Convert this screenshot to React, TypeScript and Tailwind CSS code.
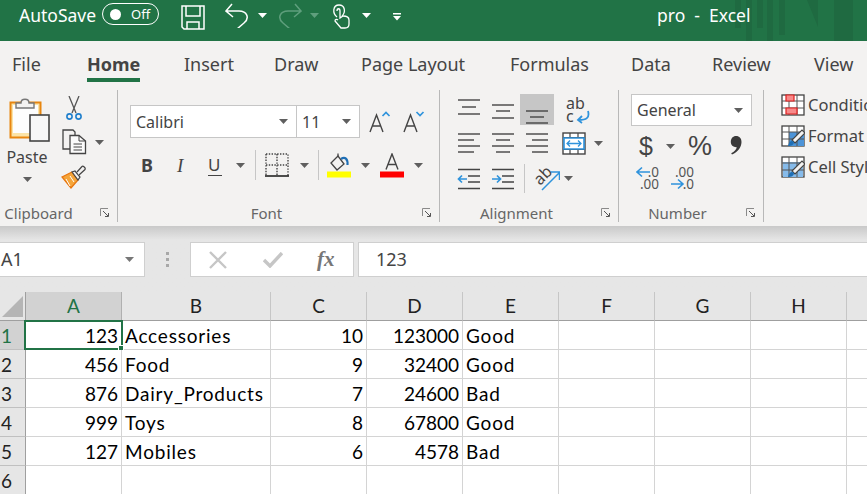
import React from "react";

const Caret = ({ c = "#5f5f5f", className = "" }: { c?: string; className?: string }) => (
  <svg width="9" height="5" viewBox="0 0 9 5" className={`shrink-0 ${className}`}><path d="M0 0H9L4.5 5Z" fill={c} /></svg>
);

const Launcher = () => (
  <svg width="10" height="10" viewBox="0 0 10 10" className="absolute right-[7px] top-[3px]" fill="none">
    <path d="M0.5 8V0.5H8" stroke="#8a8a8a" />
    <path d="M3 3L8 8M8.5 5V8.5H5" stroke="#555" />
  </svg>
);

const Group = ({ w, pr, label, children }: { w: string; pr: string; label: string; children: React.ReactNode }) => (
  <div className={`${w} flex h-[132px] shrink-0 flex-col border-r border-[#b8b8b8]`}>
    <div className="h-[115px] shrink-0">{children}</div>
    <div className={`${pr} relative flex h-[17px] items-center justify-center text-[15px] leading-none text-[#666]`}>
      {label}
      <Launcher />
    </div>
  </div>
);

const Lines = ({ ys, xs }: { ys: number[]; xs: [number, number][] }) => (
  <svg width="24" height="32" viewBox="0 0 24 32" fill="none" stroke="#444" strokeWidth="1.4">
    {ys.map((y, i) => <path key={i} d={`M${xs[i][0]} ${y}H${xs[i][1]}`} />)}
  </svg>
);

const Paste = () => (
  <svg width="44" height="46" viewBox="0 0 44 46" fill="none">
    <rect x="1.5" y="6.5" width="30" height="35" fill="#fbe3a6" stroke="#e8860f" strokeWidth="2" />
    <rect x="4" y="9" width="25" height="28" fill="#fdfdfd" />
    <path d="M7 12V7H12C12 2 20 2 20 7H25V12Z" fill="#f3f2f1" stroke="#777" strokeWidth="1.4" />
    <rect x="21" y="19" width="19" height="26" fill="#f7f7f7" stroke="#444" strokeWidth="1.6" />
  </svg>
);

const Scissors = () => (
  <svg width="18" height="25" viewBox="0 0 18 25" fill="none">
    <path d="M4 0L11 17M14 0L7 17" stroke="#555" strokeWidth="1.3" />
    <circle cx="4.5" cy="20.5" r="2.6" stroke="#1f7fcc" strokeWidth="1.6" />
    <circle cx="13.5" cy="20.5" r="2.6" stroke="#1f7fcc" strokeWidth="1.6" />
  </svg>
);

const Copy = () => (
  <svg width="26" height="26" viewBox="0 0 26 26" fill="none" stroke="#444" strokeWidth="1.3">
    <path d="M10 20H2V1H12L14 3V6" fill="#f3f2f1" />
    <path d="M9 6.5H18L24.5 12V24.5H9Z" fill="#fbfbfb" />
    <path d="M18 6.5V12H24.5M12.5 15H21M12.5 18H21M12.5 21H21" strokeWidth="1" />
  </svg>
);

const Brush = () => (
  <svg width="26" height="24" viewBox="0 0 26 24" fill="none">
    <path d="M1 12L11 7L17 15L10 23Z" fill="#f5a53a" stroke="#e8760f" strokeWidth="1.3" />
    <path d="M5 14L9 21M9 11L13 17" stroke="#fff" strokeWidth="1" />
    <path d="M11 7L17 15L19 12L14 6Z" fill="#f3f2f1" stroke="#444" strokeWidth="1.2" />
    <path d="M16 7L21 1.5C22 .5 25 3 24 4.5L18 10" fill="#f3f2f1" stroke="#444" strokeWidth="1.2" />
  </svg>
);

const Grow = ({ down = false }: { down?: boolean }) => (
  <svg width="22" height="22" viewBox="0 0 22 22" fill="none">
    <path d="M1 21L7.5 4L14 21M3.5 15H11.5" stroke="#444" strokeWidth="1.4" />
    <path d={down ? "M13.5 1L17 4.5L20.5 1" : "M13.5 5L17 1.5L20.5 5"} stroke="#2f93dc" strokeWidth="1.7" />
  </svg>
);

const Borders = () => (
  <svg width="24" height="24" viewBox="0 0 24 24" fill="none">
    <path d="M1 1H23V23M1 1V23M12 1V23M1 12H23" stroke="#444" strokeWidth="1.4" strokeDasharray="1.4 1.4" />
    <path d="M0 23H24" stroke="#222" strokeWidth="1.6" />
  </svg>
);

const Fill = () => (
  <svg width="24" height="25" viewBox="0 0 24 25" className="block">
    <path d="M4 10L11 3L17 11L10 17Z" fill="none" stroke="#444" strokeWidth="1.3" />
    <path d="M11 3V0.5" stroke="#444" strokeWidth="1.3" />
    <path d="M14 6C18 3 21 6 20.5 12" fill="none" stroke="#1f6fb5" strokeWidth="2.2" />
    <rect x="0" y="18.5" width="24" height="6" fill="#ffff00" />
  </svg>
);

const FontColor = () => (
  <svg width="24" height="25" viewBox="0 0 24 25" className="block" fill="none">
    <path d="M6 16.5L12 1L18 16.5M8 11.5H16" stroke="#444" strokeWidth="1.4" />
    <rect x="0" y="18.5" width="24" height="6" fill="#ff0000" />
  </svg>
);

const WrapText = () => (
  <div className="relative ml-[8px] mt-[3px] h-[28px] w-[24px]">
    <span className="absolute left-0 top-0 text-[16px] leading-[13px] text-[#444]">ab<br />c</span>
    <svg width="14" height="14" viewBox="0 0 14 14" fill="none" className="absolute bottom-[1px] right-0">
      <path d="M12 1C14 8 10 10 3 10M6 6L2 10L6 13" stroke="#2f93dc" strokeWidth="1.8" />
    </svg>
  </div>
);

const Merge = () => (
  <svg width="24" height="23" viewBox="0 0 24 23" fill="none">
    <rect x="1" y="1" width="22" height="21" stroke="#444" strokeWidth="1.4" fill="#fff" />
    <path d="M1 5.5H23M1 17.5H23M8 17.5V22M16 17.5V22M8 1V5.5M16 1V5.5" stroke="#444" strokeWidth="1.2" />
    <path d="M1 6H23M1 17H23M2 6V17M22 6V17" stroke="#2f93dc" strokeWidth="1.6" />
    <path d="M5 11.5H19M8 8.5L5 11.5L8 14.5M16 8.5L19 11.5L16 14.5" stroke="#2f93dc" strokeWidth="1.3" />
  </svg>
);

const Indent = ({ right = false }: { right?: boolean }) => (
  <svg width="24" height="22" viewBox="0 0 24 22" fill="none">
    <path d="M1 1.5H23M11 8H23M11 14H23M1 20.5H23" stroke="#444" strokeWidth="1.4" />
    <path d={right ? "M1 11H9M6 7.5L9.5 11L6 14.5" : "M1.5 11H10M5 7.5L1.5 11L5 14.5"} stroke="#2f93dc" strokeWidth="1.7" />
  </svg>
);

const Orient = () => (
  <div className="relative h-[26px] w-[26px]">
    <span className="absolute left-[-1px] top-[1px] origin-center -rotate-45 text-[16px] leading-none text-[#444]">ab</span>
    <svg width="26" height="26" viewBox="0 0 26 26" fill="none" className="absolute left-0 top-0">
      <path d="M8 24L25 7M17 6H25.5V14" stroke="#2f93dc" strokeWidth="1.5" />
    </svg>
  </div>
);

const Decimal = ({ more = false }: { more?: boolean }) => (
  <div className="relative h-[24px] w-[23px] text-[13.5px] leading-[12px] text-[#555]">
    <div className="text-right">{more ? ".00" : ".0"}</div>
    <div className="text-right">{more ? ".0" : ".00"}</div>
    <svg width="14" height="12" viewBox="0 0 14 12" fill="none" className={`absolute left-0 ${more ? "top-[12px]" : "top-0"}`}>
      <path d={more ? "M0 6H12M7 1.5L12 6L7 10.5" : "M1 6H14M6 1.5L1 6L6 10.5"} stroke="#2f93dc" strokeWidth="1.6" />
    </svg>
  </div>
);

const StyleIcon = ({ kind }: { kind: number }) => (
  <svg width="24" height="22" viewBox="0 0 24 22" fill="none" className="shrink-0">
    <rect x="1" y="1" width="22" height="20" fill="#fff" stroke="#444" strokeWidth="1.3" />
    {kind === 1 && <path d="M8 7H23V21H8Z" fill="#4d94d8" />}
    {kind === 2 && <path d="M2 6H22V21H2Z" fill="#86bbea" />}
    <path d="M1 7H23M1 14H23M8 1V21M16 1V21" stroke="#555" strokeWidth="1" />
    {kind === 0 && <path d="M5 1H13V7H5ZM5 14H16V20H5Z" fill="#f78a8a" stroke="#e02020" strokeWidth="1.2" />}
    {kind > 0 && (
      <>
        <path d="M11 15L21 5L24 8L14 18Z" fill="#f3f2f1" stroke="#444" strokeWidth="1.1" />
        <path d="M7 21C8 16 11 15 13 17C13 20 10 21 7 21Z" fill="#1f6fb5" />
      </>
    )}
  </svg>
);

const rows: [string, string, string, string, string, string][] = [
  ["1", "123", "Accessories", "10", "123000", "Good"],
  ["2", "456", "Food", "9", "32400", "Good"],
  ["3", "876", "Dairy_Products", "7", "24600", "Bad"],
  ["4", "999", "Toys", "8", "67800", "Good"],
  ["5", "127", "Mobiles", "6", "4578", "Bad"],
  ["6", "", "", "", "", ""],
];

const cols = ["A", "B", "C", "D", "E", "F", "G", "H"];
const gridCols = "grid grid-cols-[26px_96px_149px_96px_96px_96px_96px_96px_96px_21px]";
const cell = "flex h-[29px] items-center overflow-hidden whitespace-nowrap border-r border-b border-[#d4d4d4] px-[3px] pt-[2px] text-[19px] text-black";

const tabs: [string, string][] = [
  ["File", "w-[75px]"],
  ["Home", "w-[97px]"],
  ["Insert", "w-[90px]"],
  ["Draw", "w-[87px]"],
  ["Page Layout", "w-[149px]"],
  ["Formulas", "w-[121px]"],
  ["Data", "w-[81px]"],
  ["Review", "w-[102px]"],
  ["View", "w-[50px]"],
];

export default function App() {
  return (
    <div className="h-[494px] w-[867px] overflow-hidden bg-white font-['Noto_Sans','Open_Sans',sans-serif]">
      {/* Title bar */}
      <div className="relative flex h-[41px] items-start bg-[#217346] pl-[19px] text-white">
        <div className="absolute right-0 top-0 h-[41px] w-[140px]">
          <svg width="140" height="41" viewBox="0 0 140 41" fill="#1f6a41">
            <path d="M8 0h6v28H8zM19 0h6v41h-6zM30 0h6v28h-6zM40 0h6v41h-6zM52 0h6v35h-6zM80 0h11v27zM107 0h19v41h-19z" />
          </svg>
        </div>
        <span className="mt-[3px] text-[17.5px] leading-[24px]">AutoSave</span>
        <div className="ml-[6px] mt-[3px] flex h-[22px] w-[57px] items-center rounded-full border border-white pl-[7px]">
          <span className="h-[11px] w-[11px] rounded-full bg-white" />
          <span className="ml-[10px] text-[13px] leading-none">Off</span>
        </div>
        <svg width="24" height="25" viewBox="0 0 24 25" fill="none" stroke="white" strokeWidth="1.5" className="ml-[22px] mt-[5px]">
          <path d="M1 1H23V24H3L1 22Z" />
          <path d="M5 1V11H19V1M6 24V17H18V24" />
        </svg>
        <svg width="24" height="25" viewBox="0 0 24 25" fill="none" stroke="white" strokeWidth="1.5" className="ml-[20px] mt-[3px]">
          <path d="M1 8H14C22 8 25 15 19 20L12 26M7 1L1 8L8 14" />
        </svg>
        <Caret c="#fff" className="ml-[9px] mt-[13px]" />
        <svg width="24" height="25" viewBox="0 0 24 25" fill="none" stroke="#5f9f7d" strokeWidth="1.5" className="ml-[11px] mt-[3px]">
          <path d="M23 8H10C2 8 -1 15 5 20L12 26M17 1L23 8L16 14" />
        </svg>
        <Caret c="#5f9f7d" className="ml-[8px] mt-[13px]" />
        <svg width="18" height="25" viewBox="0 0 18 25" fill="none" stroke="white" strokeWidth="1.3" className="ml-[13px] mt-[4px]">
          <path d="M5 13C0 9 1 1 7 1C13 1 14 8 10 12" />
          <path d="M5 7C5 4 8 4 8 7V14L11 12C14 12 17 13 17 16V20C17 23 15 24 13 24H9L3 17C3 15 5 15 6 16" />
        </svg>
        <Caret c="#fff" className="ml-[12px] mt-[13px]" />
        <svg width="8" height="8" viewBox="0 0 8 8" className="ml-[22px] mt-[13px]" fill="white">
          <path d="M0 0H8V1.4H0ZM0 3H8L4 7.5Z" />
        </svg>
        <span className="absolute left-[657px] top-[2px] z-10 whitespace-pre text-[17.5px] leading-[26px]">pro  -  Excel</span>
      </div>

      {/* Tabs */}
      <div className="flex h-[49px] bg-[#f3f2f1] pl-[12px] text-[18px] text-[#444]">
        {tabs.map(([t, w]) => (
          <div key={t} className={`${w} shrink-0 pt-[9px] leading-[28px]`}>
            {t === "Home" ? (
              <span className="inline-block border-b-[4px] border-[#217346] pb-[1px] font-bold leading-[26px]">{t}</span>
            ) : t}
          </div>
        ))}
      </div>

      {/* Ribbon */}
      <div className="flex h-[136px] overflow-hidden bg-[#f3f2f1]">
        <Group w="w-[118px]" pr="pr-[40px]" label="Clipboard">
          <div className="flex pl-[9px] pt-[6px]">
            <div className="flex w-[44px] flex-col items-center">
              <Paste />
              <span className="ml-[-8px] mt-[4px] text-[16px] leading-[22px] text-[#444]">Paste</span>
              <Caret className="ml-[-8px] mt-[9px]" />
            </div>
            <div className="ml-[8px] flex flex-col">
              <div className="ml-[4px]"><Scissors /></div>
              <div className="mt-[8px] flex items-center">
                <Copy />
                <Caret className="ml-[8px]" />
              </div>
              <div className="mt-[10px]"><Brush /></div>
            </div>
          </div>
        </Group>

        <Group w="w-[322px]" pr="pr-[24px]" label="Font">
          <div className="pl-[12px] pt-[15px]">
            <div className="flex items-center">
              <div className="flex h-[33px] w-[167px] items-center justify-between border border-[#c6c6c6] bg-white pl-[5px] pr-[8px] text-[16px] text-[#444]">
                Calibri <Caret />
              </div>
              <div className="ml-[-1px] flex h-[33px] w-[64px] items-center justify-between border border-[#c6c6c6] bg-white pl-[5px] pr-[8px] text-[16px] text-[#444]">
                11 <Caret />
              </div>
              <div className="ml-[9px]"><Grow /></div>
              <div className="ml-[12px]"><Grow down /></div>
            </div>
            <div className="mt-[9px] flex h-[36px] items-center text-[#444]">
              <span className="ml-[11px] w-[14px] text-[18px] font-bold leading-none">B</span>
              <span className="ml-[22px] w-[10px] font-['Liberation_Serif',serif] text-[19px] italic leading-none">I</span>
              <span className="ml-[21px] w-[14px] border-b border-[#444] text-[17px] leading-[20px]">U</span>
              <Caret className="ml-[14px]" />
              <div className="ml-[10px] h-[30px] w-px bg-[#c6c6c6]" />
              <div className="ml-[9px]"><Borders /></div>
              <Caret className="ml-[11px]" />
              <div className="ml-[9px] h-[30px] w-px bg-[#c6c6c6]" />
              <div className="ml-[8px]"><Fill /></div>
              <Caret className="ml-[10px]" />
              <div className="ml-[10px]"><FontColor /></div>
              <Caret className="ml-[10px]" />
            </div>
          </div>
        </Group>

        <Group w="w-[179px]" pr="pr-[25px]" label="Alignment">
          <div className="grid grid-cols-[34px_34px_34px_40px_20px] grid-rows-[33px_35px_35px] items-center pl-[12px] pt-[3px]">
            <div className="flex justify-center pr-[1px]"><Lines ys={[6, 13, 20]} xs={[[1, 23], [5, 19], [1, 23]]} /></div>
            <div className="flex justify-center"><Lines ys={[11, 17, 24]} xs={[[1, 23], [5, 19], [1, 23]]} /></div>
            <div className="flex h-[31px] items-center justify-center bg-[#c6c6c6]"><Lines ys={[17, 23, 29]} xs={[[1, 23], [5, 19], [1, 23]]} /></div>
            <div className="flex justify-center"><WrapText /></div>
            <div />
            <div className="flex justify-center pr-[1px]"><Lines ys={[6, 12, 18, 24]} xs={[[1, 23], [1, 17], [1, 23], [1, 17]]} /></div>
            <div className="flex justify-center"><Lines ys={[6, 12, 18, 24]} xs={[[1, 23], [5, 19], [1, 23], [5, 19]]} /></div>
            <div className="flex justify-center"><Lines ys={[6, 12, 18, 24]} xs={[[1, 23], [7, 23], [1, 23], [7, 23]]} /></div>
            <div className="flex justify-center"><Merge /></div>
            <Caret />
            <div className="flex justify-center pr-[1px]"><Indent /></div>
            <div className="flex justify-center"><Indent right /></div>
            <div className="col-span-3 flex items-center pl-[4px]">
              <div className="h-[29px] w-px bg-[#c6c6c6]" />
              <div className="ml-[9px]"><Orient /></div>
              <Caret className="ml-[4px]" />
            </div>
          </div>
        </Group>

        <Group w="w-[145px]" pr="pr-[27px]" label="Number">
          <div className="pl-[12px] pt-[4px]">
            <div className="flex h-[32px] w-[121px] items-center justify-between border border-[#c6c6c6] bg-white pl-[5px] pr-[8px] text-[16px] text-[#444]">
              General <Caret />
            </div>
            <div className="mt-[1px] flex h-[38px] items-center text-[#444]">
              <span className="ml-[8px] font-['Liberation_Sans',sans-serif] text-[25px] leading-none">$</span>
              <Caret className="ml-[13px]" />
              <span className="ml-[13px] font-['Liberation_Sans',sans-serif] text-[27px] leading-none">%</span>
              <svg width="12" height="20" viewBox="0 0 12 20" className="mb-[3px] ml-[18px]" fill="#3a3a3a">
                <path d="M6 1C9.5 1 11.5 3.5 11.5 7C11.5 12 8 17 2 19.5L1.2 18.3C4.5 16.5 6.2 14.5 6.8 12.2C3.5 12.5 0.8 10.3 0.8 6.8C0.8 3.4 3 1 6 1Z" />
              </svg>
            </div>
            <div className="mt-[1px] flex items-center pl-[5px]">
              <Decimal />
              <div className="ml-[12px]"><Decimal more /></div>
            </div>
          </div>
        </Group>

        <div className="flex flex-col pl-[17px] pt-[4px] text-[16.5px] leading-[22px] text-[#444]">
          {["Conditional Formatting", "Format as Table", "Cell Styles"].map((t, i) => (
            <div key={t} className="mb-[9px] flex w-[120px] items-center gap-[3px] overflow-hidden whitespace-nowrap">
              <StyleIcon kind={i} />
              <span>{t}</span>
            </div>
          ))}
        </div>
      </div>

      {/* Formula bar */}
      <div className="h-[66px] bg-[#e6e6e6] bg-gradient-to-b from-[#c9c9c9] to-[#e6e6e6] to-[14px] pt-[16px]">
        <div className="flex h-[35px] items-stretch text-[18px] text-[#444]">
          <div className="ml-[-1px] flex w-[146px] items-center justify-between border border-[#cfcfcf] bg-white pl-[1px] pr-[10px]">
            A1 <Caret c="#777" />
          </div>
          <div className="flex w-[45px] flex-col items-center justify-center gap-[3px]">
            <span className="h-[3px] w-[3px] bg-[#a8a8a8]" />
            <span className="h-[3px] w-[3px] bg-[#a8a8a8]" />
            <span className="h-[3px] w-[3px] bg-[#a8a8a8]" />
          </div>
          <div className="flex w-[164px] items-center border border-[#cfcfcf] bg-white pl-[18px]">
            <svg width="18" height="18" viewBox="0 0 18 18" stroke="#c6c6c6" strokeWidth="2.4" fill="none"><path d="M1 1L17 17M17 1L1 17" /></svg>
            <svg width="20" height="16" viewBox="0 0 20 16" stroke="#c6c6c6" strokeWidth="3.4" fill="none" className="ml-[36px]"><path d="M1 8L7 14L19 1" /></svg>
            <span className="ml-[34px] font-['Liberation_Serif',serif] text-[21px] font-bold italic leading-none text-[#777]">fx</span>
          </div>
          <div className="ml-[4px] flex flex-1 items-center border border-r-0 border-[#cfcfcf] bg-white pl-[17px]">123</div>
        </div>
      </div>

      {/* Sheet */}
      <div className="font-['Lato',sans-serif]">
        <div className={gridCols}>
          <div className="flex h-[29px] items-end justify-center border-b border-r border-[#9f9f9f] bg-[#e6e6e6] pb-[2px]">
            <svg width="22" height="22" viewBox="0 0 22 22"><path d="M21 0V21H0Z" fill="#b5b5b5" /></svg>
          </div>
          {cols.map((c, i) => (
            <div
              key={i}
              className={`flex h-[29px] items-center justify-center border-b border-r border-b-[#9f9f9f] text-[19px] ${
                i === 0 ? "border-r-[#b0b0b0] bg-[#d2d2d2] text-[#217346]" : "border-r-[#c6c6c6] bg-[#e6e6e6] text-[#222]"
              }`}
            >
              {c}
            </div>
          ))}
          <div className="h-[29px] border-b border-[#9f9f9f] bg-[#e6e6e6]" />
        </div>
        {rows.map((r) => (
          <div key={r[0]} className={gridCols}>
            <div className={`flex h-[29px] items-center border-b border-r border-b-[#c0c0c0] border-r-[#9f9f9f] pl-[1px] pt-[2px] text-[19px] ${r[0] === "1" ? "bg-[#d2d2d2] text-[#217346]" : "bg-[#e6e6e6] text-[#222]"}`}>
              {r[0]}
            </div>
            <div className={`${cell} relative justify-end overflow-visible`}>
              {r[1]}
              {r[0] === "1" && (
                <div className="absolute inset-x-[-2px] inset-y-[-1px] border-2 border-[#217346]">
                  <span className="absolute bottom-[-3px] right-[-3px] h-[6px] w-[6px] border border-white bg-[#217346]" />
                </div>
              )}
            </div>
            <div className={`${cell} tracking-[0.8px]`}>{r[2]}</div>
            <div className={`${cell} justify-end`}>{r[3]}</div>
            <div className={`${cell} justify-end`}>{r[4]}</div>
            <div className={`${cell} tracking-[0.8px]`}>{r[5]}</div>
            <div className={cell} />
            <div className={cell} />
            <div className={cell} />
            <div className="h-[29px] border-b border-[#d4d4d4]" />
          </div>
        ))}
      </div>
    </div>
  );
}
